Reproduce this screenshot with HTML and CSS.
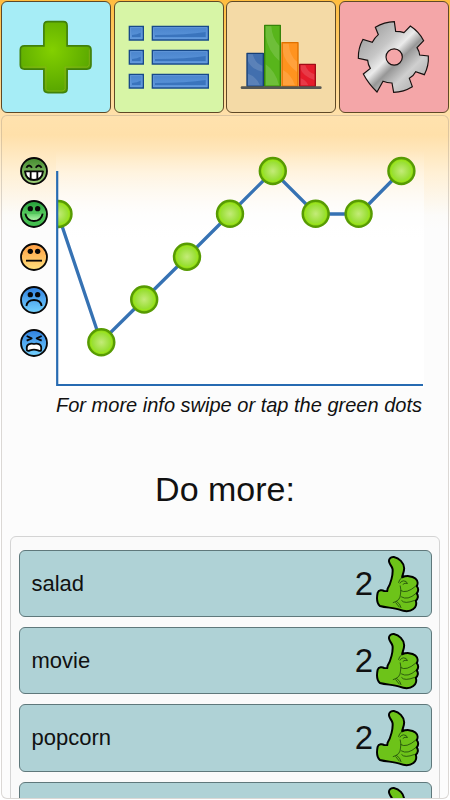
FILE: index.html
```html
<!DOCTYPE html>
<html lang="en">
<head>
  <meta charset="UTF-8">
  <meta name="viewport" content="width=device-width, initial-scale=1.0">
  <title>Mood chart</title>
  <link rel="stylesheet" href="styles.css">
</head>
<body>
<nav class="tabs">
  <a href="#" class="tab tab-add" aria-label="Add">
    <svg width="74" height="74" viewBox="60 60 220 220">
      <defs>
        <radialGradient id="plus" cx=".45" cy=".4" r=".6">
          <stop offset="0" stop-color="#83d000"/>
          <stop offset="1" stop-color="#58a600"/>
        </radialGradient>
      </defs>
      <path d="M145 65H192Q203 65 203 77V137H262Q274 137 274 149V194Q274 206 262 206H203V264Q203 276 191 276H146Q134 276 134 264V206H76Q64 206 64 194V149Q64 137 76 137H134V77Q134 65 145 65Z" fill="url(#plus)" stroke="#41810b" stroke-width="5"/>
      <path d="M140 200V266Q143 271 150 271H188Q196 270 197 264V200H262Q269 198 269 191V148M140 200H72" fill="none" stroke="#8fae22" stroke-width="2"/>
    </svg>
  </a>
  <a href="#" class="tab tab-list" aria-label="List">
    <svg width="82" height="64" viewBox="382 73 246 192">
      <defs>
        <linearGradient id="bar" x2="0" y2="1">
          <stop offset="0" stop-color="#4a84cc"/>
          <stop offset="1" stop-color="#5d97dc"/>
        </linearGradient>
        <g id="row">
          <path d="M386 77H428V118H386ZM455 77H623V118H455Z" fill="url(#bar)" stroke="#17498a" stroke-width="4"/>
          <path d="M390 81H424V114H390ZM459 81H619V114H459Z" fill="none" stroke="#6c9fdb" stroke-width="2"/>
          <path d="M394 103Q410 101 420 96V109H394ZM463 103Q560 103 615 94V109H463Z" fill="#3a74bd"/>
        </g>
      </defs>
      <use href="#row"/>
      <use href="#row" y="72"/>
      <use href="#row" y="144"/>
    </svg>
  </a>
  <a href="#" class="tab tab-stats" aria-label="Statistics">
    <svg width="82" height="68" viewBox="48 66 246 204">
      <g stroke-width="4" stroke-linejoin="round">
        <path d="M69 157H118V256H69Z" fill="#426fae" stroke="#153e75"/>
        <path d="M122 73H169V256H122Z" fill="#58b51b" stroke="#36840a"/>
        <path d="M174 125H222V256H174Z" fill="#ff931f" stroke="#df7100"/>
        <path d="M227 190H274V256H227Z" fill="#e51c2b" stroke="#a20c17"/>
      </g>
      <g fill="#fff" opacity=".13">
        <path d="M72 160H86Q94 188 115 194V212Q82 205 72 180ZM72 218Q95 225 108 253H72Z"/>
        <path d="M125 76H142Q144 112 166 134V180Q132 150 125 105ZM125 190Q154 210 165 253H125Z"/>
        <path d="M177 128H194Q197 165 219 182V213Q181 182 177 152ZM177 207Q203 222 213 253H177Z"/>
        <path d="M230 193H244Q250 213 271 220V237Q235 224 230 204ZM230 232Q245 237 253 253H230Z"/>
      </g>
      <path d="M54 260H289" stroke="#555753" stroke-width="8" stroke-linecap="round"/>
    </svg>
  </a>
  <a href="#" class="tab tab-settings" aria-label="Settings">
    <svg width="74" height="74" viewBox="400 60 222 222">
      <defs>
        <linearGradient id="steel" x1=".15" y1=".12" x2=".86" y2=".85">
          <stop offset="0" stop-color="#a2a2a2"/>
          <stop offset=".3" stop-color="#c6c6c6"/>
          <stop offset=".46" stop-color="#ebebeb"/>
          <stop offset=".6" stop-color="#979797"/>
          <stop offset=".8" stop-color="#cfcfcf"/>
          <stop offset="1" stop-color="#b5b5b5"/>
        </linearGradient>
      </defs>
      <path fill-rule="evenodd" d="M455 82Q482 66 512 65L516 94Q530 94 541 98L560 78Q586 95 600 122L580 143Q587 154 588 165L614 168Q616 197 602 224L576 215Q570 227 557 235L566 260Q540 276 510 277L505 249Q490 249 478 244L460 276Q434 251 419 222L440 205Q433 194 432 181L404 175Q403 145 418 118L446 127Q453 113 464 104ZM536 171A24.500 24.500 0 1 0 487 171A24.500 24.500 0 1 0 536 171Z" fill="url(#steel)" stroke="#17100f" stroke-width="3.500"/>
    </svg>
  </a>
</nav>

<main class="page">
  <section class="mood">
    <div class="faces">
      <svg viewBox="0 0 84 84">
        <defs>
          <linearGradient id="moss" x2="0" y2="1"><stop stop-color="#438a2f"/><stop offset="1" stop-color="#a2d37c"/></linearGradient>
          <linearGradient id="green" x2="0" y2="1"><stop stop-color="#229c38"/><stop offset=".45" stop-color="#51c65b"/><stop offset="1" stop-color="#3eba4a"/></linearGradient>
          <linearGradient id="glow" x2="0" y2="1"><stop stop-color="#5fce66"/><stop offset="1" stop-color="#b5f8ae"/></linearGradient>
          <linearGradient id="amber" x2="0" y2="1"><stop stop-color="#ff9d42"/><stop offset="1" stop-color="#ffe17e"/></linearGradient>
          <linearGradient id="blue" x2="0" y2="1"><stop stop-color="#2f80e0"/><stop offset="1" stop-color="#75d3ff"/></linearGradient>
        </defs>
        <circle cx="42" cy="42" r="39" fill="url(#moss)"/>
        <path d="M19 32Q27 19 36 32M47 32Q56 19 65 32"/>
        <path d="M15 43H69Q66 69 42 69Q18 69 15 43Z" fill="#fff"/>
        <path d="M32 44V67M52 44V67"/>
      </svg>
      <svg viewBox="0 0 84 84">
        <circle cx="42" cy="42" r="39" fill="url(#green)"/>
        <path d="M18 40Q42 44 66 40Q62 62 42 62Q22 62 18 40Z" class="shine"/>
        <g class="eyes"><circle cx="31" cy="26" r="8"/><circle cx="53" cy="26" r="8"/></g>
        <path d="M16 41Q20 63 42 63Q64 63 68 41"/>
      </svg>
      <svg viewBox="0 0 84 84">
        <circle cx="42" cy="42" r="39" fill="url(#amber)"/>
        <g class="eyes"><circle cx="31" cy="25" r="8"/><circle cx="53" cy="25" r="8"/></g>
        <path d="M18 53H66"/>
      </svg>
      <svg viewBox="0 0 84 84">
        <circle cx="42" cy="42" r="39" fill="url(#blue)"/>
        <g class="eyes"><circle cx="31" cy="26" r="8"/><circle cx="53" cy="26" r="8"/></g>
        <path d="M19 60Q22 42 42 42Q62 42 65 60"/>
      </svg>
      <svg viewBox="0 0 84 84">
        <circle cx="42" cy="42" r="39" fill="url(#blue)"/>
        <path d="M20 21L35 28L20 35M65 21L50 28L65 35"/>
        <path d="M26 46Q34 42 42 45Q50 42 58 46Q66 50 63 65Q60 67 54 64Q42 60 30 64Q24 67 21 64Q18 50 26 46Z" fill="#fff"/>
      </svg>
    </div>
    <svg class="chart" width="368" height="238" viewBox="56 150 368 238">
      <defs>
        <radialGradient id="dot">
          <stop offset="0" stop-color="#c4eb79"/>
          <stop offset=".7" stop-color="#99df35"/>
          <stop offset=".8" stop-color="#9be51d"/>
          <stop offset="1" stop-color="#79bd0b"/>
        </radialGradient>
        <clipPath id="plot"><path d="M57 150H424V388H57Z"/></clipPath>
      </defs>
      <g clip-path="url(#plot)">
        <path d="M58 214L101 342L144 299.500L187 257L230 214L273 171L316 214H359L401.500 171" fill="none" stroke="#3672b3" stroke-width="3.300"/>
        <g fill="url(#dot)" stroke="#579b02" stroke-width="2.400">
          <circle cx="58.500" cy="214" r="13"/>
          <circle cx="101.300" cy="342.300" r="13"/>
          <circle cx="144.200" cy="299.500" r="13"/>
          <circle cx="187" cy="256.700" r="13"/>
          <circle cx="230" cy="213.800" r="13"/>
          <circle cx="272.800" cy="171" r="13"/>
          <circle cx="315.700" cy="213.800" r="13"/>
          <circle cx="358.600" cy="213.800" r="13"/>
          <circle cx="401.400" cy="171" r="13"/>
        </g>
      </g>
      <path d="M57.200 171V385H423" fill="none" stroke="#276bb2" stroke-width="2.200"/>
    </svg>
  </section>
  <p class="hint">For more info swipe or tap the green dots</p>

  <h2>Do more:</h2>
  <div class="list">
    <div class="item">
      <span class="name">salad</span>
      <span class="count">2</span>
      <svg class="thumb" viewBox="104 74 136 178">
        <defs>
          <g id="thumb">
            <path d="M147 96C144 86 151 79 161 80C177 83 191 97 192 113C193 125 186 135 186 141C198 136 216 136 226 145C234 152 234 162 230 168C236 174 236 184 230 190C236 197 234 207 227 212C231 221 227 233 220 237C207 247 191 244 178 239C160 232 140 234 119 228C109 219 109 202 112 188C115 179 126 179 132 183H141L142 176C152 160 159 132 157 116C155 107 149 104 147 96Z" fill="#6dc319" stroke="#000" stroke-width="6" stroke-linejoin="round"/>
            <path d="M186 141Q176 150 175 158M179 160Q183 152 190 152Q200 152 202 160Q194 157 188 163M180 166Q184 181 181 192Q181 212 158 218M181 181Q199 192 227 168M183 200Q203 212 228 190M184 211Q193 223 224 211M168 213Q181 222 183 234M166 217L178 232" fill="none" stroke="#14370a" stroke-width="2.200"/>
          </g>
        </defs>
        <use href="#thumb"/>
      </svg>
    </div>
    <div class="item">
      <span class="name">movie</span>
      <span class="count">2</span>
      <svg class="thumb" viewBox="104 74 136 178"><use href="#thumb"/></svg>
    </div>
    <div class="item">
      <span class="name">popcorn</span>
      <span class="count">2</span>
      <svg class="thumb" viewBox="104 74 136 178"><use href="#thumb"/></svg>
    </div>
    <div class="item">
      <span class="name"></span>
      <span class="count"></span>
      <svg class="thumb" viewBox="104 74 136 178"><use href="#thumb"/></svg>
    </div>
  </div>
</main>
</body>
</html>
```
FILE: styles.css
```css
* {
  box-sizing: border-box;
}
html, body {
  height: 100%;
  margin: 0;
}
body {
  display: flex;
  flex-direction: column;
  font-family: "Liberation Sans", Arial, sans-serif;
  color: #111;
  overflow: hidden;
  background: linear-gradient(#ffbd3f 0, #ffcf72 55px, #ffe0aa 115px, #fff 230px) no-repeat;
}
.tabs {
  display: grid;
  grid-template-columns: repeat(4, 1fr);
  gap: 2.6px;
  height: 115px;
  padding: 1px 1px 2px;
  flex: none;
}
.tab {
  display: flex;
  align-items: center;
  justify-content: center;
  border: 1px solid #5f4926;
  border-radius: 6px;
}
.tab-add {
  background: #a6edf6;
}
.tab-list {
  background: #d7f5a6;
}
.tab-stats {
  background: #f4daa6;
}
.tab-settings {
  background: #f4a6a8;
}
.page {
  flex: 1;
  min-height: 0;
  margin: 0 1px 1px;
  padding: 34px 8px 0;
  border: 1px solid rgba(150, 140, 130, .32);
  border-radius: 6px;
  overflow: hidden;
  background: linear-gradient(#ffe2ae 0, #ffe0aa 20px, #fff0d5 58px, #fcfbf9 100px, #fcfcfc 115px) no-repeat border-box;
}
.mood {
  display: flex;
  padding-left: 10px;
}
.faces {
  display: flex;
  flex-direction: column;
  gap: 15px;
  width: 28px;
  margin: 7px 8px 0 0;
}
.faces svg {
  width: 28px;
  height: 28px;
  fill: none;
  stroke: #080808;
  stroke-width: 5.5;
  stroke-linejoin: round;
}
.faces .eyes {
  fill: #080808;
  stroke: none;
}
.faces .shine {
  fill: url(#glow);
  stroke: none;
}
.chart {
  background: linear-gradient(rgba(255, 255, 255, 0), #fff 90px);
}
.hint {
  margin: 5px 0 0 46px;
  font-size: 20.03px;
  font-style: italic;
  line-height: 24px;
  white-space: nowrap;
}
h2 {
  margin: 52px 0 27px;
  font-size: 34px;
  font-weight: normal;
  line-height: 40px;
  text-align: center;
}
.list {
  padding: 13px 7.5px;
  border: 1px solid #d4d4d4;
  border-radius: 6px;
  background: #fafafa;
}
.item {
  display: flex;
  align-items: center;
  height: 67.2px;
  margin-bottom: 10px;
  padding: 1px 10.5px 0 12px;
  border: 1px solid #5f787b;
  border-radius: 6px;
  background: #afd2d6;
}
.name {
  flex: 1;
  font-size: 22px;
}
.count {
  font-size: 33px;
}
.thumb {
  width: 45px;
  height: 59px;
  margin-left: 2px;
}
```
